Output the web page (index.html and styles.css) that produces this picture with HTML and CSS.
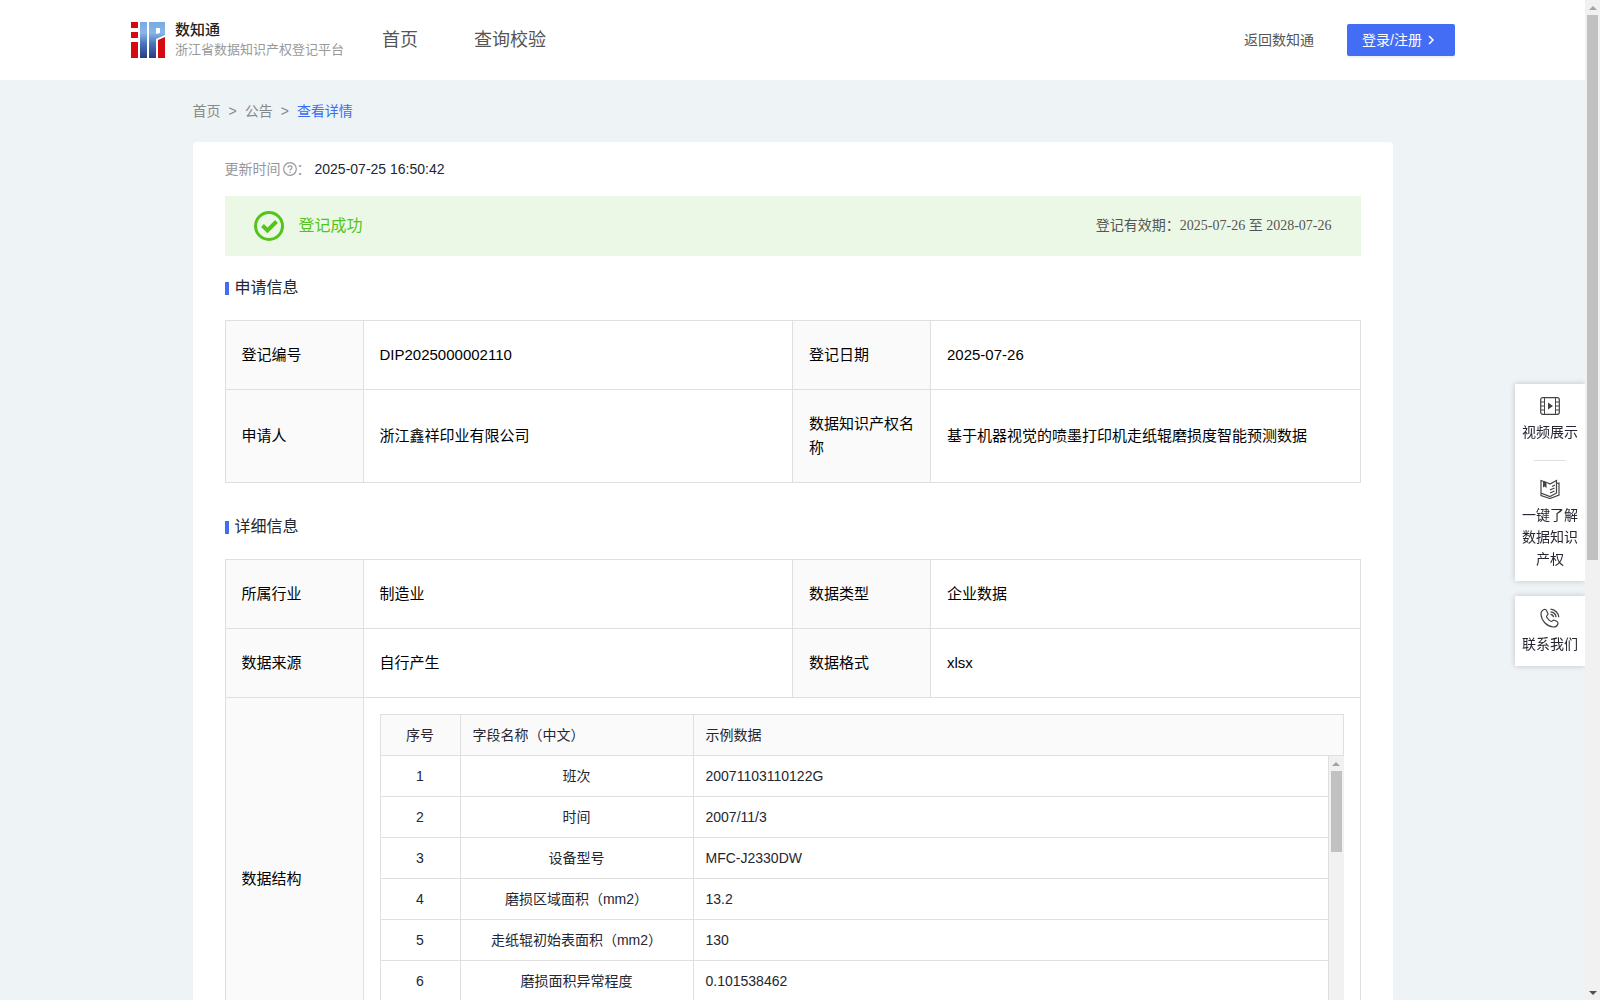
FILE: index.html
```html
<!DOCTYPE html>
<html lang="zh-CN">
<head>
<meta charset="utf-8">
<title>浙江省数据知识产权登记平台</title>
<link rel="stylesheet" href="styles.css">
</head>
<body>
<div class="app">
  <div class="page">
    <header class="topbar">
      <a class="brand" href="#">
        <svg class="brand-mark" viewBox="0 0 34 36" aria-hidden="true">
          <defs>
            <linearGradient id="blue" x1="0" y1="0" x2="0" y2="36" gradientUnits="userSpaceOnUse">
              <stop offset="0" stop-color="#7aa9e0"/>
              <stop offset=".3" stop-color="#86b6ea"/>
              <stop offset=".6" stop-color="#4a74bd"/>
              <stop offset="1" stop-color="#273c82"/>
            </linearGradient>
          </defs>
          <path fill="#d40a0e" d="M0 0h7v6H0zM0 10h7v6H0zM0 20h7v16H0zM27 18l7-3v21h-7z"/>
          <path fill="url(#blue)" d="M9 0h7v36H9zM18 0h16v13l-9 4v19h-7zM25 6v6l4-1V6z" fill-rule="evenodd"/>
        </svg>
        <span class="brand-text">
          <strong class="brand-name">数知通</strong>
          <span class="brand-sub">浙江省数据知识产权登记平台</span>
        </span>
      </a>
      <nav class="nav">
        <a href="#">首页</a>
        <a href="#">查询校验</a>
      </nav>
      <a class="back" href="#">返回数知通</a>
      <button class="login" type="button">登录/注册
        <svg class="chevron" viewBox="0 0 8 10" aria-hidden="true"><path d="M2 1l4 4-4 4" fill="none" stroke="currentColor" stroke-width="1.5"/></svg>
      </button>
    </header>

    <main class="content">
      <nav class="crumbs">
        <a href="#">首页</a><span>&gt;</span><a href="#">公告</a><span>&gt;</span><a class="current" href="#">查看详情</a>
      </nav>

      <section class="card">
        <div class="updated">
          <span>更新时间</span>
          <svg class="help" viewBox="0 0 14 14" aria-hidden="true"><g fill="none" stroke="currentColor"><circle cx="7" cy="7" r="6.3" stroke-width="1.2"/><path d="M5 5.6C5 3.2 9 3.2 9 5.5 9 7 7 6.900 7 8.500" stroke-width="1.200"/></g><circle cx="7" cy="10.300" r=".8" fill="currentColor"/></svg>
          <span>：</span>
          <time>2025-07-25 16:50:42</time>
        </div>

        <div class="banner">
          <svg class="ok" viewBox="0 0 30 30" aria-hidden="true"><circle cx="15" cy="15" r="13.500" fill="none" stroke="currentColor" stroke-width="3"/><path d="M8.500 14.500l5 5 9-9" fill="none" stroke="currentColor" stroke-width="4"/></svg>
          <span class="banner-title">登记成功</span>
          <span class="validity">登记有效期：2025-07-26 至 2028-07-26</span>
        </div>

        <h2 class="section-title">申请信息</h2>
        <table class="info">
          <colgroup><col class="label-col"><col><col class="label-col"><col></colgroup>
          <tr><th scope="row">登记编号</th><td>DIP2025000002110</td><th scope="row">登记日期</th><td>2025-07-26</td></tr>
          <tr class="tall"><th scope="row">申请人</th><td>浙江鑫祥印业有限公司</td><th scope="row">数据知识产权名称</th><td>基于机器视觉的喷墨打印机走纸辊磨损度智能预测数据</td></tr>
        </table>

        <h2 class="section-title">详细信息</h2>
        <table class="info">
          <colgroup><col class="label-col"><col><col class="label-col"><col></colgroup>
          <tr><th scope="row">所属行业</th><td>制造业</td><th scope="row">数据类型</th><td>企业数据</td></tr>
          <tr><th scope="row">数据来源</th><td>自行产生</td><th scope="row">数据格式</th><td>xlsx</td></tr>
          <tr>
            <th scope="row">数据结构</th>
            <td class="nested" colspan="3">
              <table class="fields fields-head">
                <colgroup><col class="no-col"><col class="name-col"><col></colgroup>
                <thead><tr><th scope="col">序号</th><th scope="col">字段名称（中文）</th><th scope="col">示例数据</th></tr></thead>
              </table>
              <div class="fields-body">
                <table class="fields">
                  <colgroup><col class="no-col"><col class="name-col"><col></colgroup>
                  <tbody>
                    <tr><td>1</td><td>班次</td><td>20071103110122G</td></tr>
                    <tr><td>2</td><td>时间</td><td>2007/11/3</td></tr>
                    <tr><td>3</td><td>设备型号</td><td>MFC-J2330DW</td></tr>
                    <tr><td>4</td><td>磨损区域面积（mm2）</td><td>13.2</td></tr>
                    <tr><td>5</td><td>走纸辊初始表面积（mm2）</td><td>130</td></tr>
                    <tr><td>6</td><td>磨损面积异常程度</td><td>0.101538462</td></tr>
                  </tbody>
                </table>
                <div class="scrollbar fields-scroll" aria-hidden="true"><i class="arrow up"></i><i class="thumb"></i></div>
              </div>
            </td>
          </tr>
        </table>
      </section>
    </main>
  </div>
  <div class="scrollbar page-scroll" aria-hidden="true"><i class="arrow up"></i><i class="thumb"></i><i class="arrow down"></i></div>

  <aside class="dock">
    <div class="dock-card">
      <a class="dock-item" href="#">
        <svg class="dock-icon" viewBox="0 0 20 20" fill="none" stroke="currentColor" aria-hidden="true"><rect x=".7" y="1.700" width="18.600" height="16.600" rx="2" stroke-width="1.200"/><path d="M4.500 2v16M15.500 2v16M1 6h4M1 10h4M1 14h4M15 6h4M15 10h4M15 14h4"/><path d="M8 6.500l5 3.500-5 3.500z" fill="currentColor" stroke="none"/></svg>
        <span>视频展示</span>
      </a>
      <a class="dock-item divided" href="#">
        <svg class="dock-icon" viewBox="0 0 20 20" fill="none" stroke="currentColor" stroke-width="1.200" aria-hidden="true"><path d="M1 1.500l7 2.500 2 1 6.500-3.500V14l-6.500 3.500L1 14z"/><path d="M1 14.500v2l9 3 9-3.500V4l-2 .5M10 11l4.500-2M10 14l4.500-2M12 7.500L15 6"/><path d="M3 2l3.500 1.200v6L4.800 7.500 3 8.500z" fill="currentColor" stroke="none"/></svg>
        <span>一键了解数据知识产权</span>
      </a>
    </div>
    <div class="dock-card">
      <a class="dock-item" href="#">
        <svg class="dock-icon" viewBox="0 0 20 20" fill="none" stroke="currentColor" aria-hidden="true"><path stroke-width="1.200" d="M4 1.500C2 2.500.8 4 1 6.500 1.500 13 7 18.500 13.500 19c2.500.1 4-1.500 4.500-3.500.2-1-.2-1.500-1-2l-2.500-1.300c-1.500-.7-2 .8-3 1.300-1 .3-5-3.500-5-5 0-1 1.700-1.500 1.500-2.800L6.500 2.500C6 1.300 5.300 1 4 1.500z"/><path stroke-width="1.300" d="M10.500 1.200c4.500.3 8 3.800 8.300 8M10.500 3.800c3 .3 5.300 2.500 5.600 5.400M10.500 6.300c1.700.2 2.900 1.400 3.100 2.900"/></svg>
        <span>联系我们</span>
      </a>
    </div>
  </aside>
</div>
</body>
</html>
```
FILE: styles.css
```css
* { box-sizing: border-box; }

body {
  margin: 0;
  font-family: "Liberation Sans", "Noto Sans CJK SC", sans-serif;
  font-size: 14px;
  line-height: 22px;
  color: #252631;
  background: #eef3f6;
}

a { color: inherit; text-decoration: none; }

.app {
  display: grid;
  grid-template-columns: minmax(0, 1fr) 15px;
  height: 100vh;
  overflow: hidden;
}

.page { overflow: hidden; }

/* Top bar */
.topbar {
  display: flex;
  align-items: center;
  height: 80px;
  padding: 0 130px 0 131px;
  background: #fff;
  color: #555;
}

.brand { display: flex; align-items: center; gap: 10px; width: 251px; }
.brand-mark { width: 34px; height: 36px; }
.brand-text { display: flex; flex-direction: column; white-space: nowrap; }
.brand-name { font-size: 15px; font-weight: 500; line-height: 20px; color: #222; }
.brand-sub { font-size: 13px; line-height: 20px; color: #999; }

.nav { display: flex; flex: 1; gap: 56px; font-size: 18px; }
.back { margin-right: 33px; }

.login {
  display: flex;
  align-items: center;
  gap: 5px;
  height: 32px;
  padding: 0 20px 0 15px;
  border: 0;
  border-radius: 2px;
  background: #446df6;
  box-shadow: 0 2px 0 rgba(0, 0, 0, .05);
  color: #fff;
  font: inherit;
}
.chevron { width: 8px; height: 10px; }

/* Breadcrumbs and card */
.content { max-width: 1200px; margin: 0 auto; }

.crumbs { display: flex; gap: 8px; padding: 20px 0; color: #888; }
.crumbs .current { color: #3a6cf6; }

.card { padding: 16px 32px; border-radius: 4px; background: #fff; }

.updated { display: flex; align-items: center; color: #96979c; }
.updated time { margin-left: 4px; color: #252631; }
.help { width: 14px; height: 14px; margin-left: 2px; }

.banner {
  display: flex;
  align-items: center;
  height: 60px;
  margin-top: 16px;
  padding: 0 29px;
  background: #ecf8e6;
}
.ok { width: 30px; height: 30px; color: #52c41a; }
.banner-title { flex: 1; margin-left: 15px; font-size: 16px; color: #52c41a; }
.validity { font-family: "Liberation Serif", "Noto Sans CJK SC", serif; color: #555; }

.section-title {
  display: flex;
  align-items: center;
  gap: 6px;
  margin: 20px 0;
  font-size: 16px;
  font-weight: 400;
  line-height: 24px;
}
.section-title::before { content: ""; width: 4px; height: 13px; background: #446df6; }
.info + .section-title { margin-top: 32px; }

/* Information tables */
.info, .fields { width: 100%; border-collapse: collapse; table-layout: fixed; }

.info { font-size: 15px; line-height: 24px; color: #000; }
.label-col { width: 138px; }
.info th, .info td {
  height: 69px;
  padding: 0 16px;
  border: 1px solid #dfdfdf;
  font-weight: 400;
  text-align: left;
}
.info th { background: #fafafa; }
.info .tall th, .info .tall td { height: 93px; }

.info .nested { padding: 16px; }
.no-col { width: 80px; }
.name-col { width: 233px; }

.info .fields { font-size: 14px; line-height: 22px; color: #252631; }
.info .fields th, .info .fields td { height: 41px; padding: 0 12px; }
.info .fields td { text-align: center; }
.info .fields td:last-child { text-align: left; }
.info .fields th:first-child { text-align: center; }
.info .fields tbody tr:first-child td { height: 40px; border-top: 0; }

.fields-body { display: flex; align-items: flex-start; height: 288px; overflow: hidden; }
.fields-body .fields { flex: 1; }

/* Scrollbars */
.scrollbar {
  display: flex;
  flex-direction: column;
  align-items: center;
  width: 15px;
  background: #f1f1f1;
}
.fields-scroll { align-self: stretch; }
.thumb { width: 11px; height: 81px; background: #c1c1c1; }
.page-scroll .thumb { height: 545px; }
.arrow { height: 15px; }
.arrow::before {
  content: "";
  display: block;
  margin-top: 6px;
  border: 4px solid transparent;
  border-top-width: 0;
  border-bottom-color: #a3a3a3;
}
.arrow.down { margin-top: auto; }
.arrow.down::before { border-width: 4px 4px 0; border-top-color: #505050; }

/* Floating dock */
.dock {
  position: fixed;
  top: 384px;
  right: 15px;
  display: flex;
  flex-direction: column;
  gap: 15px;
  width: 70px;
  clip-path: inset(-12px 0 -12px -12px);
}
.dock-card { background: #fff; box-shadow: 0 0 6px rgba(0, 0, 0, .2); }
.dock-item {
  display: flex;
  flex-direction: column;
  align-items: center;
  gap: 5px;
  padding: 12px 7px 11px;
  text-align: center;
}
.dock-icon { width: 20px; height: 20px; color: #444; }
.divided::before { content: ""; width: 32px; height: 1px; margin-bottom: 13px; background: #dfdfdf; }
.divided { padding-top: 6px; }
```
